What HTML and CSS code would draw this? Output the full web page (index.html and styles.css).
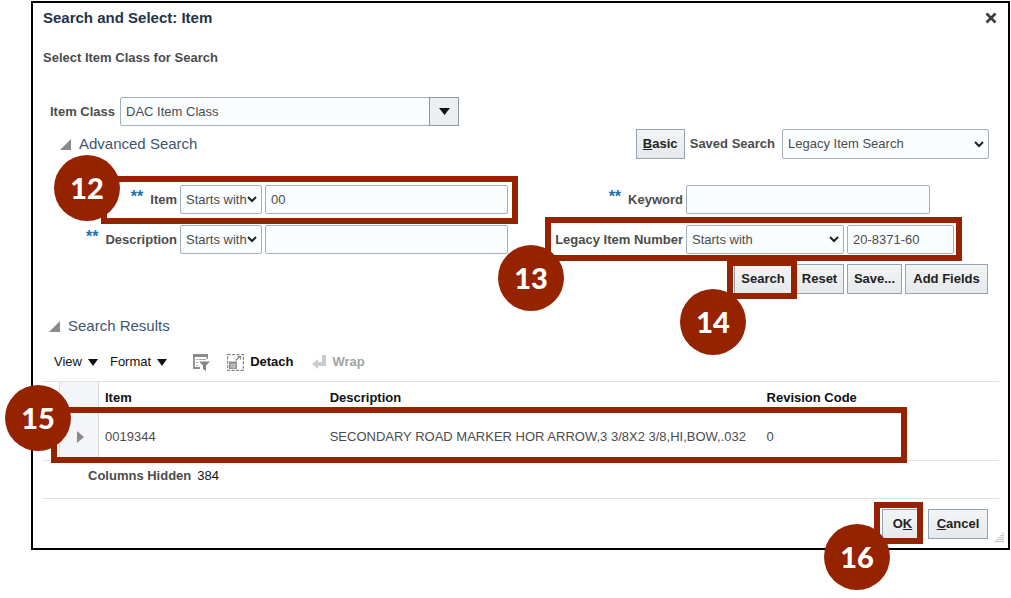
FILE: index.html
```html
<!DOCTYPE html>
<html lang="en">
<head>
<meta charset="utf-8">
<title>Search and Select: Item</title>
<link rel="stylesheet" href="styles.css">
</head>
<body>
<main class="dialog">
  <header class="dialog-header">
    <h1 class="title">Search and Select: Item</h1>
    <button class="close" type="button" aria-label="Close">
      <svg width="12" height="12" viewBox="0 0 12 12"><path d="M1.500 1.500l9 9M10.500 1.500l-9 9" stroke="#3a3a3a" stroke-width="2.600"/></svg>
    </button>
  </header>
  <h2 class="subtitle">Select Item Class for Search</h2>

  <div class="class-row">
    <label for="item-class">Item Class</label>
    <div class="combo">
      <input class="box" id="item-class" type="text" value="DAC Item Class">
      <button class="combo-button" type="button" aria-label="Open list">
        <svg width="11" height="7" viewBox="0 0 11 7"><path d="M0 0h11L5.500 7z" fill="#111"/></svg>
      </button>
    </div>
  </div>

  <div class="advanced-row">
    <svg width="11" height="11" viewBox="0 0 11 11"><path d="M11 0v11H0z" fill="#8a8a8a"/></svg>
    <h2 class="section">Advanced Search</h2>
    <button class="button basic" type="button"><u>B</u>asic</button>
    <label for="saved">Saved Search</label>
    <select class="box saved" id="saved"><option>Legacy Item Search</option></select>
  </div>

  <div class="fields">
    <div class="field">
      <label class="field-label" for="item"><span class="stars">**</span>Item</label>
      <select class="box operator" aria-label="Item operator"><option>Starts with</option></select>
      <input class="box value" id="item" type="text" value="00">
      <div class="frame frame-item"></div>
      <div class="badge badge-item">12</div>
    </div>
    <div class="field keyword">
      <label class="field-label" for="keyword"><span class="stars">**</span>Keyword</label>
      <input class="box value" id="keyword" type="text">
    </div>
    <div class="field">
      <label class="field-label" for="description"><span class="stars">**</span>Description</label>
      <select class="box operator" aria-label="Description operator"><option>Starts with</option></select>
      <input class="box value" id="description" type="text">
    </div>
    <div class="field legacy">
      <label class="field-label" for="legacy">Legacy Item Number</label>
      <select class="box operator-wide" aria-label="Legacy Item Number operator"><option>Starts with</option></select>
      <input class="box value" id="legacy" type="text" value="20-8371-60">
      <div class="frame frame-legacy"></div>
      <div class="badge badge-legacy">13</div>
    </div>
  </div>

  <div class="actions">
    <div class="anchor">
      <button class="button search" type="button">Search</button>
      <div class="frame frame-search"></div>
      <div class="badge badge-search">14</div>
    </div>
    <button class="button reset" type="button">Reset</button>
    <button class="button save" type="button">Save...</button>
    <button class="button add" type="button">Add Fields</button>
  </div>

  <div class="results-heading">
    <svg width="11" height="11" viewBox="0 0 11 11"><path d="M11 0v11H0z" fill="#8a8a8a"/></svg>
    <h2 class="section">Search Results</h2>
  </div>

  <div class="toolbar">
    <button class="tool menu" type="button">View
      <svg width="10" height="7" viewBox="0 0 10 7"><path d="M0 0h10L5 7z" fill="#111"/></svg>
    </button>
    <button class="tool menu" type="button">Format
      <svg width="10" height="7" viewBox="0 0 10 7"><path d="M0 0h10L5 7z" fill="#111"/></svg>
    </button>
    <button class="tool filter" type="button" aria-label="Query by example">
      <svg width="17" height="17" viewBox="0 0 17 17" fill="none" stroke="#8b8b8b">
        <path d="M0 1.500h15" stroke-width="3"/><path d="M1 2v12h6" stroke-width="1.800"/><path d="M14.300 2v3" stroke-width="1.400"/>
        <path d="M3 5.500h2M6 5.500h7M3 8.500h2M3 11.500h2" stroke="#a5a5a5"/>
        <path d="M6 7.500h11l-4 4V17l-3-2v-3.500z" fill="#858585" stroke="none"/>
      </svg>
    </button>
    <button class="tool detach" type="button">
      <svg width="17" height="17" viewBox="0 0 17 17" fill="none" stroke="#858585">
        <rect x=".6" y=".6" width="15.800" height="15.800" stroke-dasharray="3 1.500" stroke-width="1.200"/>
        <path d="M2 7.500h8V15H2z" fill="#8f8f8f" stroke="none"/><path d="M3 10.500h6M3 12.700h6M5 9.500v5M7.200 9.500v5" stroke="#dedede" stroke-width=".7"/>
        <path d="M8.500 6.500l4.500-4M10.500 2.500h3v3" stroke-width="1.100"/>
      </svg>
      Detach
    </button>
    <button class="tool wrap" type="button" disabled>
      <svg width="14" height="14" viewBox="0 0 14 14"><path d="M10 0h4v11H6v3L0 9l6-5v3h4z" fill="#cbcbcb"/></svg>
      Wrap
    </button>
  </div>

  <div class="table-area">
    <table class="results">
      <colgroup><col class="col-gutter"><col class="col-expand"><col class="col-item"><col class="col-description"><col></colgroup>
      <thead>
        <tr><th></th><th class="expander"></th><th>Item</th><th>Description</th><th>Revision Code</th></tr>
      </thead>
      <tbody>
        <tr>
          <td></td>
          <td class="expander"><svg width="7" height="12" viewBox="0 0 7 12"><path d="M0 0l7 6-7 6z" fill="#8a8a8a"/></svg></td>
          <td>0019344</td>
          <td>SECONDARY ROAD MARKER HOR ARROW,3 3/8X2 3/8,HI,BOW,.032</td>
          <td>0</td>
        </tr>
      </tbody>
    </table>
    <div class="frame frame-result"></div>
    <div class="badge badge-result">15</div>
  </div>
  <p class="hidden-columns"><b>Columns Hidden</b><span>384</span></p>

  <footer class="footer">
    <div class="anchor">
      <button class="button ok" type="button">O<u>K</u></button>
      <div class="frame frame-ok"></div>
      <div class="badge badge-ok">16</div>
    </div>
    <button class="button cancel" type="button"><u>C</u>ancel</button>
    <svg class="grip" width="10" height="10" viewBox="0 0 10 10"><path d="M9 0v10M7 2v8M5 4v6M3 6v4M1 8v2" stroke="#aaa" stroke-width="1.200" stroke-dasharray="1.200 .8"/></svg>
  </footer>
</main>
</body>
</html>
```
FILE: styles.css
```css
* {
  box-sizing: border-box;
}

body {
  margin: 0;
  background: #fff;
  color: #4c4c4c;
  font: 13px/20px "Liberation Sans", Arial, sans-serif;
}

button,
input,
select {
  font: inherit;
  color: inherit;
}

h1,
h2,
p {
  margin: 0;
}

label {
  font-weight: bold;
  white-space: nowrap;
}

svg {
  display: block;
  flex: none;
}

.dialog {
  margin: 1px 1px 40px 31px;
  padding: 0 9px 0 10px;
  border: 2px solid #000;
}

.dialog-header {
  display: flex;
  align-items: center;
  justify-content: space-between;
  height: 30px;
}

.title {
  color: #1f3449;
  font-size: 15px;
}

.close {
  padding: 2px;
  border: 0;
  background: none;
}

.subtitle {
  margin-top: 15px;
  font-size: 13px;
}

.class-row {
  display: flex;
  align-items: center;
  gap: 5px;
  margin-top: 29px;
  padding-left: 7px;
}

.combo {
  display: flex;
  flex: 0 1 339px;
  height: 29px;
}

.combo .box {
  flex: 1;
}

.box {
  min-width: 0;
  height: 29px;
  padding: 0 5px;
  border: 1px solid #a3afba;
  border-radius: 2px;
  background: #fafdfe;
}

select.box {
  padding: 0 14px 0 5px;
  appearance: none;
  background: #fafdfe url("data:image/svg+xml,%3Csvg xmlns='http://www.w3.org/2000/svg' width='10' height='7' viewBox='0 0 10 7'%3E%3Cpath d='M1 1l4 4 4-4' fill='none' stroke='%23222' stroke-width='2'/%3E%3C/svg%3E") no-repeat right 4px center;
}

.combo-button {
  display: flex;
  align-items: center;
  justify-content: center;
  width: 30px;
  margin-left: -1px;
  padding: 0;
  border: 1px solid #8d99a5;
  background: #eceff1;
}

.advanced-row {
  display: flex;
  align-items: center;
  margin-top: 3px;
  padding: 0 10px 0 17px;
}

.section {
  margin-left: 8px;
  color: #40566d;
  font-size: 15px;
  font-weight: normal;
}

.button {
  height: 30px;
  padding: 0;
  border: 1px solid #94a2b2;
  background: linear-gradient(#f2f4f5, #e6e9ec);
  color: #222;
  font-weight: bold;
}

.basic {
  width: 49px;
  margin: 0 5px 0 auto;
}

.saved {
  width: 207px;
  height: 30px;
  margin-left: 7px;
}

.fields {
  display: grid;
  grid-template-columns: minmax(0, 465fr) minmax(0, 491fr);
  row-gap: 11px;
  margin-top: 26px;
}

.field {
  display: flex;
  align-items: center;
  gap: 3px;
  position: relative;
}

.field-label {
  display: flex;
  justify-content: flex-end;
  flex: none;
  width: 134px;
}

.stars {
  margin: -3px 7px 0 0;
  color: #1c6fb0;
  font-size: 16px;
}

.operator {
  width: 82px;
}

.operator-wide {
  width: 158px;
}

.value {
  flex: 1;
}

.legacy {
  padding-right: 45px;
}

.keyword {
  padding-right: 69px;
}

.keyword .field-label,
.legacy .field-label {
  width: 175px;
}

.actions {
  display: flex;
  justify-content: flex-end;
  gap: 3px;
  margin-top: 10px;
  padding-right: 11px;
}

.anchor {
  position: relative;
}

.search {
  width: 58px;
}

.reset {
  width: 49px;
}

.save {
  width: 55px;
}

.add {
  width: 83px;
}

.results-heading {
  display: flex;
  align-items: center;
  margin-top: 22px;
  padding-left: 6px;
}

.toolbar {
  display: flex;
  align-items: center;
  height: 28px;
  margin-top: 12px;
  padding-left: 11px;
}

.tool {
  display: flex;
  align-items: center;
  gap: 6px;
  padding: 0;
  border: 0;
  background: none;
  color: #111;
}

.menu {
  margin-right: 12px;
}

.filter {
  margin: 0 17px 0 14px;
}

.detach {
  font-weight: bold;
}

.wrap {
  margin-left: 19px;
  color: #a3a3a3;
  font-weight: bold;
}

.table-area {
  position: relative;
  margin-top: 5px;
}

.results {
  width: 100%;
  border-collapse: separate;
  border-spacing: 0;
  border-top: 1px solid #dfe4e8;
  border-bottom: 1px solid #dfe4e8;
  table-layout: fixed;
}

.col-gutter {
  width: 16px;
}

.col-expand {
  width: 40px;
}

.col-item {
  width: 23.5%;
}

.col-description {
  width: 45.7%;
}

.results th {
  height: 30px;
  padding: 1px 6px 0;
  color: #111;
  text-align: left;
}

.results td {
  height: 48px;
  padding: 2px 6px 0;
  white-space: nowrap;
}

.results .expander {
  padding-left: 17px;
  border-right: 1px solid #dadfe5;
  border-left: 1px solid #dadfe5;
  background: #f3f5f9;
}

.hidden-columns {
  display: flex;
  gap: 6px;
  height: 38px;
  padding: 5px 0 0 45px;
  border-bottom: 1px solid #dfe4e8;
}

.hidden-columns span {
  color: #111;
}

.footer {
  display: flex;
  justify-content: flex-end;
  gap: 5px;
  position: relative;
  padding: 10px 11px 9px 0;
}

.ok {
  width: 41px;
}

.cancel {
  width: 60px;
}

.grip {
  position: absolute;
  right: -5px;
  bottom: 5px;
}

/* Numbered step markers laid over the dialog */
.frame {
  position: absolute;
  z-index: 1;
  border: 6px solid #962300;
  pointer-events: none;
}

.badge {
  position: absolute;
  z-index: 2;
  width: 66px;
  height: 66px;
  border-radius: 50%;
  background: #962300;
  color: #fff;
  font: 900 29px/66px Lato, sans-serif;
  text-align: center;
}

.frame-item {
  inset: -9px -10px -10px 58px;
}

.badge-item {
  top: -30px;
  left: 11px;
}

.frame-legacy {
  inset: -8px 37px -7px 37px;
}

.badge-legacy {
  top: 20px;
  left: -10px;
}

.frame-search {
  inset: -4px -5px -5px -7px;
}

.badge-search {
  top: 25px;
  left: -54px;
}

.frame-result {
  inset: 26px 92px -2px 8px;
}

.badge-result {
  top: 4px;
  left: -38px;
}

.frame-ok {
  inset: -7px 0 -5px -8px;
}

.badge-ok {
  top: 15px;
  left: -58px;
}
```
